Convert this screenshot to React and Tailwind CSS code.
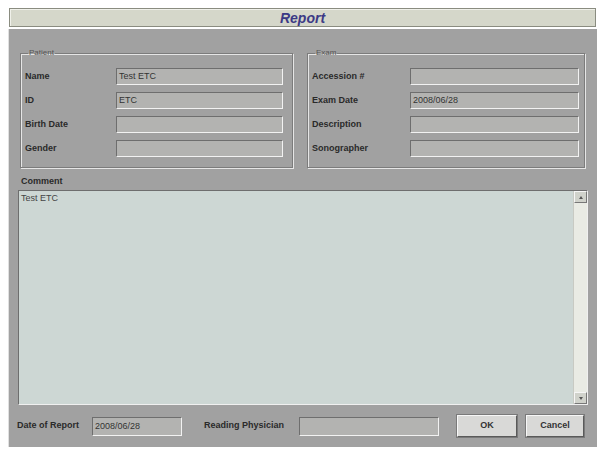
import { useState } from "react";

function Field({ value }) {
  return (
    <div className="h-[17px] flex-1 bg-[#b3b3b1] border border-t-[#6e6e6e] border-l-[#6e6e6e] border-b-[#f2f2f2] border-r-[#f2f2f2] px-[2px] text-[9px] leading-[15px] text-[#333]">
      {value}
    </div>
  );
}

function Row({ label, value, labelW }) {
  return (
    <div className="flex items-center h-[17px]">
      <span className={`${labelW} text-[9px] font-bold text-[#2a2a2a]`}>{label}</span>
      <Field value={value} />
    </div>
  );
}

function Group({ title, rows, labelW, pad }) {
  return (
    <fieldset className={`border border-[#7c7c7c] shadow-[1px_1px_0_#e6e6e6,inset_1px_1px_0_#e6e6e6] pt-[10px] pb-[10px] ${pad}`}>
      <legend className="text-[8px] text-[#555] px-[1px] ml-[3px] leading-[10px]">{title}</legend>
      <div className="flex flex-col gap-[7px]">
        {rows.map((r) => (
          <Row key={r[0]} label={r[0]} value={r[1]} labelW={labelW} />
        ))}
      </div>
    </fieldset>
  );
}

export default function App() {
  const [comment, setComment] = useState("Test ETC");

  return (
    <div className="w-[601px] h-[451px] bg-white pt-[8px] pl-[8px] font-['Liberation_Sans',Arial,sans-serif]">
      <div className="w-[589px] flex flex-col">
        {/* Title bar */}
        <div className="h-[19px] mx-[1px] bg-[#d5d7ca] border border-[#8a8c80] shadow-[inset_1px_1px_0_#f0f1ea] flex items-center justify-center">
          <span className="text-[14px] font-bold italic text-[#3c3a86] leading-none">Report</span>
        </div>

        {/* Body */}
        <div className="mt-[2px] h-[418px] bg-[#a1a1a1] border-l border-[#e0e0e0] flex flex-col px-[11px]">
          <div className="grid grid-cols-[273px_278px] gap-[14px] mt-[19px]">
            <Group
              title="Patient"
              labelW="w-[91px]"
              pad="pl-[4px] pr-[9px]"
              rows={[
                ["Name", "Test ETC"],
                ["ID", "ETC"],
                ["Birth Date", ""],
                ["Gender", ""],
              ]}
            />
            <Group
              title="Exam"
              labelW="w-[98px]"
              pad="pl-[4px] pr-[5px]"
              rows={[
                ["Accession #", ""],
                ["Exam Date", "2008/06/28"],
                ["Description", ""],
                ["Sonographer", ""],
              ]}
            />
          </div>

          {/* Comment */}
          <div className="mt-[7px] ml-[1px] text-[9px] font-bold text-[#2a2a2a] leading-[12px]">Comment</div>
          <div className="mt-[3px] -ml-[2px] w-[570px] h-[215px] flex bg-[#cdd7d4] border border-t-[#6e6e6e] border-l-[#6e6e6e] border-b-[#f0f0f0] border-r-[#f0f0f0]">
            <textarea
              value={comment}
              onChange={(e) => setComment(e.target.value)}
              className="flex-1 resize-none bg-transparent outline-none px-[2px] py-[1px] text-[9px] text-[#444] leading-[12px]"
            />
            <div className="w-[14px] flex flex-col bg-[#e9ebe4] border-l border-[#c8cac3]">
              <div className="h-[12px] bg-[#d0d2cb] border border-[#f6f6f6] border-r-[#777] border-b-[#777] flex items-center justify-center">
                <div className="w-0 h-0 border-l-[2px] border-r-[2px] border-b-[3px] border-l-transparent border-r-transparent border-b-[#555]" />
              </div>
              <div className="flex-1" />
              <div className="h-[12px] bg-[#d0d2cb] border border-[#f6f6f6] border-r-[#777] border-b-[#777] flex items-center justify-center">
                <div className="w-0 h-0 border-l-[2px] border-r-[2px] border-t-[3px] border-l-transparent border-r-transparent border-t-[#555]" />
              </div>
            </div>
          </div>

          {/* Bottom row */}
          <div className="mt-[10px] -ml-[3px] flex items-center h-[22px]">
            <span className="w-[75px] text-[9px] font-bold text-[#2a2a2a]">Date of Report</span>
            <div className="w-[90px] h-[19px] bg-[#b3b3b1] border border-t-[#6e6e6e] border-l-[#6e6e6e] border-b-[#f2f2f2] border-r-[#f2f2f2] px-[2px] text-[9px] leading-[17px] text-[#333]">
              2008/06/28
            </div>
            <span className="ml-[22px] w-[95px] text-[9px] font-bold text-[#2a2a2a]">Reading Physician</span>
            <div className="w-[140px] h-[19px] bg-[#b3b3b1] border border-t-[#6e6e6e] border-l-[#6e6e6e] border-b-[#f2f2f2] border-r-[#f2f2f2]" />
            <button className="ml-[18px] w-[60px] h-[22px] bg-[#d9d9d7] border border-[#f7f7f7] border-r-[#5a5a5a] border-b-[#5a5a5a] shadow-[0_0_0_1px_#7a7a7a] text-[9px] font-bold text-[#333]">
              OK
            </button>
            <button className="ml-[9px] w-[58px] h-[22px] bg-[#d9d9d7] border border-[#f7f7f7] border-r-[#5a5a5a] border-b-[#5a5a5a] shadow-[0_0_0_1px_#7a7a7a] text-[9px] font-bold text-[#333]">
              Cancel
            </button>
          </div>
        </div>
      </div>
    </div>
  );
}
